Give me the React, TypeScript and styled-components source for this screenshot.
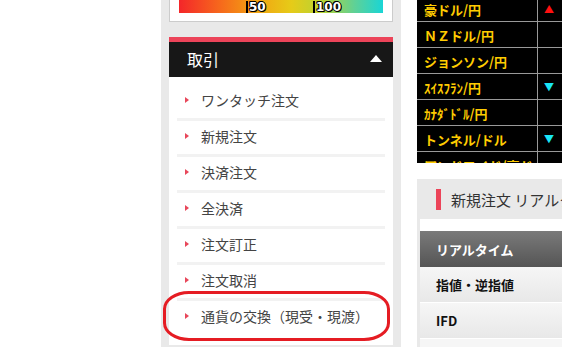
import styled, { createGlobalStyle } from 'styled-components'

const GlobalStyle = createGlobalStyle`
  html, body {
    margin: 0;
    padding: 0;
    background: #fff;
    overflow: hidden;
  }
  body {
    font-family: 'Noto Sans CJK JP', 'Noto Sans', sans-serif;
  }
`

// Page layout
const Page = styled.div`
  display: flex;
  align-items: flex-start;
  width: 562px;
  height: 347px;
  padding-left: 161px;
  box-sizing: border-box;
  overflow: hidden;
`

const SideColumn = styled.div`
  position: relative;
  flex: 0 0 240px;
  height: 370px;
  margin-top: -20px;
  padding: 0 8px;
  box-sizing: border-box;
  background: #e9e9e9;
`

const MainColumn = styled.div`
  flex: 0 0 180px;
  padding-left: 16px;
  display: flex;
  flex-direction: column;
  gap: 16px;
`

// Spread chart box at the top of the side column
const ChartBox = styled.div`
  background: #fff;
  border: 1px solid #ccc;
  border-top: none;
  padding: 0 9px 8px;
`

const GradientBar = styled.div`
  position: relative;
  height: 33px;
  background: linear-gradient(to right, #f4262a 0%, #f6681c 20%, #f2a312 38%, #e6cb18 55%, #b8d334 70%, #5fd196 86%, #19d5d6 100%);
`

const Tick = styled.span<{ left: number }>`
  position: absolute;
  bottom: 0;
  left: ${(p) => p.left}px;
  display: flex;
  align-items: flex-end;
  gap: 1px;
  font-family: 'DejaVu Sans', sans-serif;
  font-size: 12px;
  font-weight: bold;
  line-height: 12px;
  color: #fff;
  text-shadow: -1px 0 #000, 1px 0 #000, 0 -1px #000, 0 1px #000, 1px 1px #000, -1px -1px #000;

  &::before {
    content: '';
    width: 2px;
    height: 12px;
    background: #000;
  }
`

// Trade menu section
const Section = styled.div`
  margin-top: 15px;
  border-top: 5px solid #ec4459;
`

const SectionHeader = styled.div`
  height: 35px;
  display: flex;
  align-items: center;
  justify-content: space-between;
  padding: 0 11px 2px 18px;
  box-sizing: border-box;
  background: #171717;
  color: #fff;
  font-size: 16px;
`

const UpArrow = styled.span`
  width: 0;
  height: 0;
  border-left: 6px solid transparent;
  border-right: 6px solid transparent;
  border-bottom: 7px solid #fff;
`

const MenuList = styled.ul`
  list-style: none;
  margin: 0;
  padding: 8px 8px 8px;
  background: #fff;
`

const MenuItem = styled.li<{ last?: boolean }>`
  height: 30px;
  padding: 0 0 3px 8px;
  box-sizing: content-box;
  display: flex;
  align-items: center;
  gap: 12px;
  font-size: 14px;
  line-height: 18px;
  color: #444;
  border-bottom: ${(p) => (p.last ? '3px solid transparent' : '3px solid #f2f2f2')};

  &::before {
    content: '';
    flex-shrink: 0;
    width: 0;
    height: 0;
    border-top: 3px solid transparent;
    border-bottom: 3px solid transparent;
    border-left: 4px solid #e8475a;
  }
`

const Annotation = styled.div`
  position: absolute;
  left: 2px;
  top: 311px;
  width: 221px;
  height: 44px;
  border: 3px solid #e51c23;
  border-radius: 26px / 18px;
  pointer-events: none;
`

// Rate board
const RateBoard = styled.div`
  height: 167px;
  margin-top: -4px;
  overflow: hidden;
  background: #000;
  width: 170px;
`

const RateRow = styled.div`
  display: grid;
  grid-template-columns: 120px 1fr;
  height: 25px;
  border-bottom: 1px solid #999;
`

const RateName = styled.div`
  display: flex;
  align-items: center;
  padding: 2px 0 0 7px;
  color: #ffcc00;
  font-size: 13px;
  font-weight: bold;
  white-space: nowrap;
  overflow: hidden;
`

const RateMark = styled.div<{ dir?: 'up' | 'down' }>`
  border-left: 1px solid #999;
  display: flex;
  align-items: center;
  padding-left: 6px;
  font-size: 10px;
  color: ${(p) => (p.dir === 'up' ? '#ff1010' : '#19e6f5')};
`

// Order panel
const OrderPanel = styled.div`
  width: 170px;
  background: #e9e9e9;
  padding: 0 0 0 3px;
`

const PanelTitle = styled.div`
  height: 40px;
  display: flex;
  align-items: center;
  gap: 10px;
  padding-left: 16px;
  font-size: 15px;
  color: #333;
  white-space: nowrap;

  &::before {
    content: '';
    flex-shrink: 0;
    width: 5px;
    height: 21px;
    background: #ec4459;
  }
`

const PanelBody = styled.div`
  background: #fff;
  padding-top: 12px;
`

const TabRow = styled.div<{ active?: boolean; plain?: boolean }>`
  height: ${(p) => (p.active ? 36 : 35)}px;
  display: flex;
  align-items: center;
  padding-left: 16px;
  font-size: 13px;
  font-weight: bold;
  white-space: nowrap;
  color: ${(p) => (p.active ? '#fff' : '#111')};
  background: ${(p) =>
    p.active
      ? 'linear-gradient(#7a7a7a, #555)'
      : p.plain
        ? '#f6f6f6'
        : 'linear-gradient(#f6f6f6, #e8e8e8)'};
  border-bottom: ${(p) => (p.active ? 'none' : '1px solid #fff')};
`

const rates: { name: string; dir?: 'up' | 'down' }[] = [
  { name: '豪ドル/円', dir: 'up' },
  { name: 'ＮＺドル/円' },
  { name: 'ジョンソン/円' },
  { name: 'ｽｲｽﾌﾗﾝ/円', dir: 'down' },
  { name: 'ｶﾅﾀﾞﾄﾞﾙ/円' },
  { name: 'トンネル/ドル', dir: 'down' },
  { name: 'アンドロイド/豪ド' },
]

const menu = ['ワンタッチ注文', '新規注文', '決済注文', '全決済', '注文訂正', '注文取消', '通貨の交換（現受・現渡）']

function App() {
  return (
    <>
      <GlobalStyle />
      <Page>
        <SideColumn>
          <ChartBox>
            <GradientBar>
              <Tick left={67}>50</Tick>
              <Tick left={134}>100</Tick>
            </GradientBar>
          </ChartBox>
          <Section>
            <SectionHeader>
              <span>取引</span>
              <UpArrow />
            </SectionHeader>
            <MenuList>
              {menu.map((m, i) => (
                <MenuItem key={m} last={i === menu.length - 1}>
                  {m}
                </MenuItem>
              ))}
            </MenuList>
          </Section>
          <Annotation />
        </SideColumn>
        <MainColumn>
          <RateBoard>
            {rates.map((r) => (
              <RateRow key={r.name}>
                <RateName>{r.name}</RateName>
                <RateMark dir={r.dir}>{r.dir === 'up' ? '▲' : r.dir === 'down' ? '▼' : ''}</RateMark>
              </RateRow>
            ))}
          </RateBoard>
          <OrderPanel>
            <PanelTitle>新規注文 リアルタイム</PanelTitle>
            <PanelBody>
              <TabRow active>リアルタイム</TabRow>
              <TabRow>指値・逆指値</TabRow>
              <TabRow>IFD</TabRow>
              <TabRow plain />
            </PanelBody>
          </OrderPanel>
        </MainColumn>
      </Page>
    </>
  )
}

export default App
